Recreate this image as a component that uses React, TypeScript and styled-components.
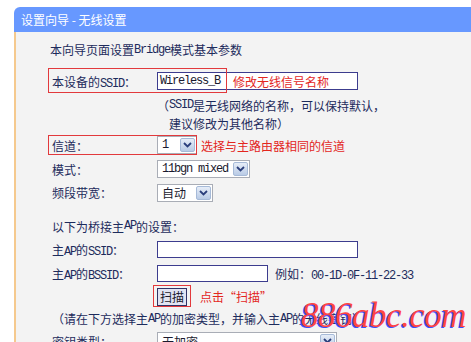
import React from "react";
import styled, { createGlobalStyle } from "styled-components";

const GlobalStyle = createGlobalStyle`
  html, body { margin: 0; padding: 0; background: #ffffff; overflow: hidden; }
  body {
    font-family: "Noto Sans CJK SC", "Noto Sans", sans-serif;
    font-size: 12px;
    color: #1d2b5c;
  }
`;

const Page = styled.div`
  position: relative;
  padding: 7px 0 0 14px;
  width: 471px;
  height: 342px;
  box-sizing: border-box;
  overflow: hidden;
`;

const Panel = styled.div`
  display: flex;
  flex-direction: column;
`;

const TitleBar = styled.div`
  height: 25px;
  background: #6798ff;
  border-top-left-radius: 6px;
  color: #ffffff;
  font-size: 12px;
  display: flex;
  align-items: center;
  padding-left: 7px;
  white-space: pre;
`;

const Body = styled.div`
  background: #f3f3f3;
  border-left: 2px solid #f5c98e;
  padding: 6px 0 20px 36px;
  display: flex;
  flex-direction: column;
`;

const Row = styled.div<{ $h: number; $mt?: number }>`
  position: relative;
  display: flex;
  align-items: center;
  height: ${(p) => p.$h}px;
  margin-top: ${(p) => p.$mt ?? 0}px;
  white-space: nowrap;
`;

const Intro = styled(Row)`
  margin-left: -2px;
`;

const Label = styled.span`
  flex: none;
  width: 105px;
`;

const Mono = styled.span`
  font-family: "Liberation Mono", "DejaVu Sans Mono", monospace;
  font-size: 12px;
  letter-spacing: -1.2px;
  line-height: 1;
`;

const Note = styled.div<{ $ml: number; $mt: number }>`
  margin-left: ${(p) => p.$ml}px;
  margin-top: ${(p) => p.$mt}px;
  display: flex;
  flex-direction: column;
  white-space: nowrap;
`;

const NoteLine = styled.div<{ $indent?: number }>`
  height: 18px;
  display: flex;
  align-items: center;
  padding-left: ${(p) => p.$indent ?? 0}px;
`;

const Annotation = styled.span<{ $ml: number }>`
  color: #e3261e;
  margin-left: ${(p) => p.$ml}px;
`;

const Highlight = styled.div<{ $l: number; $t: number; $w: number; $h: number }>`
  position: absolute;
  left: ${(p) => p.$l}px;
  top: ${(p) => p.$t}px;
  width: ${(p) => p.$w}px;
  height: ${(p) => p.$h}px;
  box-sizing: border-box;
  border: 1.5px solid #e2393c;
  pointer-events: none;
`;

const InputBox = styled.div<{ $w: number; $h: number }>`
  box-sizing: border-box;
  width: ${(p) => p.$w}px;
  height: ${(p) => p.$h}px;
  border: 1px solid #3c3c8e;
  background: #ffffff;
  display: flex;
  align-items: center;
  padding-left: 2px;
  color: #1a1a2e;
`;

const Select = styled.div<{ $w: number }>`
  box-sizing: border-box;
  width: ${(p) => p.$w}px;
  height: 18px;
  border: 1px solid #a9adb6;
  background: #ffffff;
  padding: 1px;
  display: flex;
`;

const SelectText = styled.span`
  flex: 1;
  display: flex;
  align-items: center;
  padding-left: 3px;
  color: #1a1a2e;
  overflow: hidden;
`;

const DropButton = styled.span`
  flex: none;
  width: 15px;
  box-sizing: border-box;
  border: 1px solid #a6bad8;
  border-radius: 2px;
  background: linear-gradient(#e6edf8, #b9cbe6);
  display: flex;
  align-items: center;
  justify-content: center;
`;

const ScanButton = styled.div`
  margin-left: 105px;
  box-sizing: border-box;
  width: 30px;
  height: 18px;
  border: 1px solid #2f3266;
  background: #e1e4f2;
  display: flex;
  align-items: center;
  justify-content: center;
  color: #1a1a2e;
`;

const Hint = styled.span`
  margin-left: 7px;
`;

const Watermark = styled.div`
  position: absolute;
  left: 301px;
  top: 296px;
  font-family: "Liberation Serif", serif;
  font-style: italic;
  font-size: 35px;
  letter-spacing: -0.5px;
  color: #ff4444;
  text-shadow: -1.5px 0.5px 0 #3b4cff;
  white-space: nowrap;
  pointer-events: none;
`;

const Chevron = () => (
  <svg width="9" height="6" viewBox="0 0 9 6">
    <path d="M1 1 L4.5 4.5 L8 1" fill="none" stroke="#2b3f7c" strokeWidth="1.8" />
  </svg>
);

const Dropdown: React.FC<{ w: number; children: React.ReactNode }> = ({ w, children }) => (
  <Select $w={w}>
    <SelectText>{children}</SelectText>
    <DropButton>
      <Chevron />
    </DropButton>
  </Select>
);

export default function App() {
  return (
    <>
      <GlobalStyle />
      <Page>
        <Panel>
          <TitleBar>设置向导 - 无线设置</TitleBar>
          <Body>
            <Intro $h={23}>
              本向导页面设置<Mono>Bridge</Mono>模式基本参数
            </Intro>

            <Row $h={24} $mt={8}>
              <Label>
                本设备的<Mono>SSID</Mono>：
              </Label>
              <InputBox $w={201} $h={18}>
                <Mono>Wireless_B</Mono>
                <Annotation $ml={13}>修改无线信号名称</Annotation>
              </InputBox>
              <Highlight $l={-4} $t={-1} $w={179} $h={25} />
            </Row>

            <Note $ml={105} $mt={3}>
              <NoteLine>
                （<Mono>SSID</Mono>是无线网络的名称，可以保持默认，
              </NoteLine>
              <NoteLine $indent={12}>建议修改为其他名称）</NoteLine>
            </Note>

            <Row $h={24} $mt={1}>
              <Label>信道：</Label>
              <Dropdown w={40}>
                <Mono>1</Mono>
              </Dropdown>
              <Annotation $ml={4}>选择与主路由器相同的信道</Annotation>
              <Highlight $l={-4} $t={2} $w={149} $h={20} />
            </Row>

            <Row $h={24}>
              <Label>模式：</Label>
              <Dropdown w={93}>
                <Mono>11bgn mixed</Mono>
              </Dropdown>
            </Row>

            <Row $h={23}>
              <Label>频段带宽：</Label>
              <Dropdown w={56}>自动</Dropdown>
            </Row>

            <Row $h={24} $mt={10}>
              以下为桥接主<Mono>AP</Mono>的设置：
            </Row>

            <Row $h={23}>
              <Label>
                主<Mono>AP</Mono>的<Mono>SSID</Mono>：
              </Label>
              <InputBox $w={201} $h={17} />
            </Row>

            <Row $h={24}>
              <Label>
                主<Mono>AP</Mono>的<Mono>BSSID</Mono>：
              </Label>
              <InputBox $w={111} $h={17} />
              <Hint>
                例如：<Mono>00-1D-0F-11-22-33</Mono>
              </Hint>
            </Row>

            <Row $h={23}>
              <ScanButton>扫描</ScanButton>
              <Annotation $ml={13}>点击“扫描”</Annotation>
              <Highlight $l={101} $t={0} $w={38} $h={22} />
            </Row>

            <Row $h={21}>
              （请在下方选择主<Mono>AP</Mono>的加密类型，并输入主<Mono>AP</Mono>的无线密钥）
            </Row>

            <Row $h={24}>
              <Label>密钥类型：</Label>
              <Dropdown w={180}>无加密</Dropdown>
            </Row>
          </Body>
        </Panel>
        <Watermark>886abc.com</Watermark>
      </Page>
    </>
  );
}
